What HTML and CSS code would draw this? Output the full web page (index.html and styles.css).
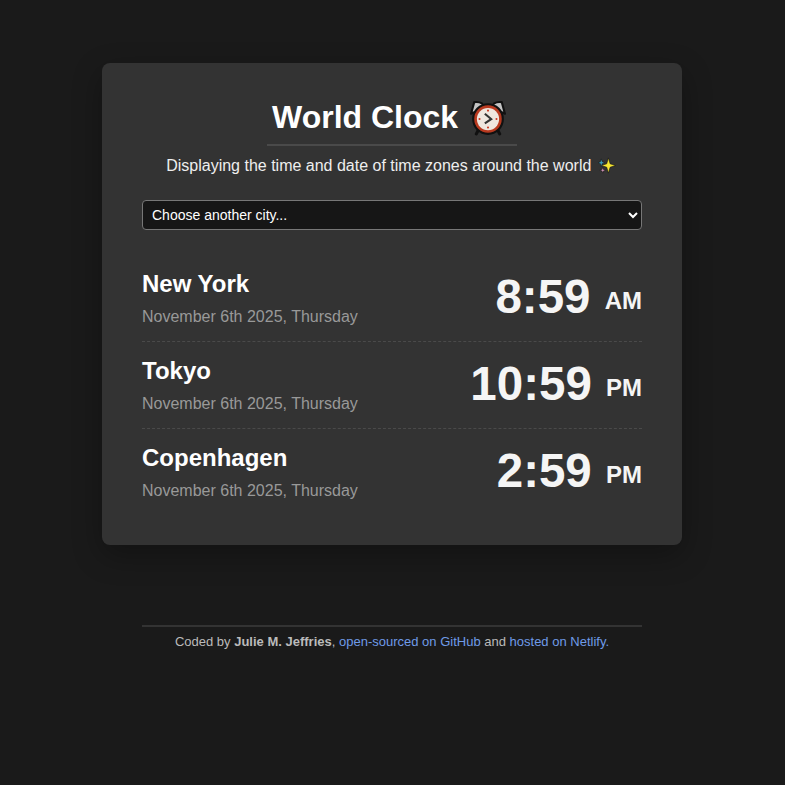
FILE: index.html
```html
<!DOCTYPE html>
<html lang="en">
<head>
    <meta charset="UTF-8">
    <meta name="viewport" content="width=device-width, initial-scale=1.0">
    <title>World Clock</title>
    <link rel="stylesheet" href="styles.css">
</head>
<body>
    <div class="container">
        <h1 class="title">World Clock
            <svg class="clock-icon" viewBox="1 1 34 34" width="36" height="36" aria-hidden="true">
                <path d="M2 14 L5 3 Q13 2 15 8 Z" fill="#c4c4c4" stroke="#111" stroke-width="2" stroke-linejoin="round"/>
                <path d="M34 14 L31 3 Q23 2 21 8 Z" fill="#c4c4c4" stroke="#111" stroke-width="2" stroke-linejoin="round"/>
                <path d="M9 29 L7 33 M27 29 L29 33" stroke="#111" stroke-width="3" stroke-linecap="round"/>
                <circle cx="18" cy="19" r="14" fill="#b8391f" stroke="#111" stroke-width="2"/>
                <circle cx="18" cy="19" r="10.5" fill="#efe6df"/>
                <circle cx="18" cy="11" r="1" fill="#c9381f"/>
                <circle cx="18" cy="27" r="1" fill="#c9381f"/>
                <circle cx="10" cy="19" r="1" fill="#c9381f"/>
                <circle cx="26" cy="19" r="1" fill="#c9381f"/>
                <path d="M15 14 L21 19 L15 23" fill="none" stroke="#333" stroke-width="2"/>
            </svg>
        </h1>
        <p class="subtitle">Displaying the time and date of time zones around the world
            <svg class="sparkle-icon" viewBox="1 1 19 19" width="18" height="18" aria-hidden="true">
                <path d="M12 2 L13.8 8.2 L19.5 10 L13.8 11.8 L12 18 L10.2 11.8 L4.5 10 L10.2 8.2 Z" fill="#f7e733" stroke="#111" stroke-width="0.6"/>
                <path d="M4.5 3 L5.5 6 L8 7 L5.5 8 L4.5 11 L3.5 8 L1 7 L3.5 6 Z" fill="#3f9db8" stroke="#111" stroke-width="0.5"/>
                <path d="M6 12 L6.8 14.2 L9 15 L6.8 15.8 L6 18 L5.2 15.8 L3 15 L5.2 14.2 Z" fill="#c98fb0" stroke="#111" stroke-width="0.5"/>
            </svg>
        </p>

        <select class="city-select">
            <option>Choose another city...</option>
            <option>New York</option>
            <option>Tokyo</option>
            <option>Copenhagen</option>
        </select>

        <div class="cities">
            <div class="city">
                <div>
                    <h2 class="city-name">New York</h2>
                    <div class="date">November 6th 2025, Thursday</div>
                </div>
                <div class="time">8:59 <small>AM</small></div>
            </div>
            <div class="city">
                <div>
                    <h2 class="city-name">Tokyo</h2>
                    <div class="date">November 6th 2025, Thursday</div>
                </div>
                <div class="time">10:59 <small>PM</small></div>
            </div>
            <div class="city">
                <div>
                    <h2 class="city-name">Copenhagen</h2>
                    <div class="date">November 6th 2025, Thursday</div>
                </div>
                <div class="time">2:59 <small>PM</small></div>
            </div>
        </div>
    </div>

    <footer class="footer">
        Coded by <strong>Julie M. Jeffries</strong>, <a href="#">open-sourced on GitHub</a> and <a href="#">hosted on Netlify.</a>
    </footer>
</body>
</html>
```

FILE: styles.css
```css
body {
    font-family: "Liberation Sans", Arial, sans-serif;
    background-color: #1a1a1a;
    color: #fff;
    margin: 0;
    padding-top: 63px;
}
.container {
    background-color: #333;
    box-sizing: border-box;
    width: 580px;
    height: 482px;
    margin: 0 auto 0 102px;
    padding: 33px 40px 30px;
    border-radius: 8px;
    box-shadow: 0 10px 30px rgba(0, 0, 0, 0.3);
}
.title {
    font-size: 32px;
    line-height: 42px;
    margin: 0 auto;
    width: 250px;
    padding-bottom: 6px;
    border-bottom: 2px solid #4a4a4a;
    text-align: center;
    white-space: nowrap;
}
.clock-icon {
    vertical-align: -8px;
    margin: 0 6px 0 3px;
}
.subtitle {
    font-size: 16px;
    line-height: 20px;
    margin: 10px 0 24px;
    text-align: center;
    color: #eee;
}
.sparkle-icon {
    vertical-align: -4px;
    margin: 0 2px;
}
.city-select {
    display: block;
    width: 100%;
    height: 30px;
    padding: 0 5px;
    font-family: inherit;
    font-size: 14px;
    color: #fff;
    background-color: #161616;
    border: 1px solid #777;
    border-radius: 4px;
    color-scheme: dark;
}
.cities {
    margin-top: 25px;
}
.city {
    display: flex;
    justify-content: space-between;
    align-items: center;
    height: 86px;
    border-bottom: 1px dashed #4a4a4a;
}
.city:last-child {
    border-bottom: none;
}
.city-name {
    font-size: 24px;
    line-height: 28px;
    margin: 0 0 9px;
}
.date {
    font-size: 16px;
    line-height: 20px;
    color: #999;
}
.time {
    font-size: 47.5px;
    font-weight: bold;
    line-height: 60px;
    margin-top: 2px;
    color: #f5f5f5;
}
.time small {
    font-size: 24px;
    vertical-align: 4px;
    margin-left: 1px;
}
.footer {
    box-sizing: border-box;
    width: 500px;
    margin: 80px 0 0 142px;
    padding-top: 7px;
    border-top: 2px solid #333;
    font-size: 13px;
    line-height: 16px;
    text-align: center;
    color: #bbb;
}
.footer a {
    color: #6f9be8;
    text-decoration: none;
}
```
